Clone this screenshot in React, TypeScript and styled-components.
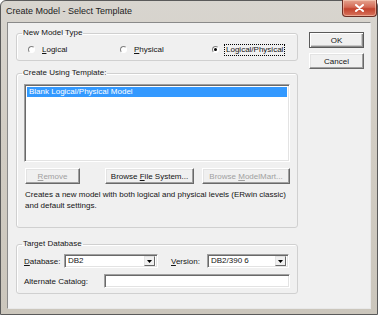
import React, { FC } from 'react';
import styled, { createGlobalStyle, css } from 'styled-components';

const GlobalStyle = createGlobalStyle`
  html, body {
    margin: 0;
    padding: 0;
    background: #ffffff;
  }
`;

const Window = styled.div`
  width: 378px;
  height: 315px;
  box-sizing: border-box;
  display: flex;
  flex-direction: column;
  padding: 0 6px 5px 6px;
  border: 1px solid #5a5a5a;
  border-radius: 6px 6px 0 0;
  background: linear-gradient(180deg, #d8d5cf 0%, #d2cdc4 40%, #cbc6bc 100%);
  font-family: 'Liberation Sans', Arial, sans-serif;
  font-size: 8px;
  color: #141414;
`;

const TitleBar = styled.div`
  height: 21px;
  display: flex;
  align-items: flex-start;
  justify-content: space-between;
  margin-left: -1px;
`;

const Title = styled.div`
  padding-top: 5px;
  font-family: 'Liberation Sans', Arial, sans-serif;
  font-size: 9px;
  color: #222222;
`;

const CloseButton = styled.div`
  width: 35px;
  height: 17px;
  margin-top: -1px;
  margin-right: -6px;
  box-sizing: border-box;
  display: flex;
  align-items: center;
  justify-content: center;
  border: 1px solid #6b2e24;
  border-top: none;
  border-radius: 0 0 4px 4px;
  background: linear-gradient(180deg, #e5a48f 0%, #d46a55 45%, #c2432d 55%, #d7735c 100%);
  box-shadow: inset 0 0 0 1px rgba(255, 220, 200, 0.5);
`;

const Client = styled.div`
  flex: 1;
  display: flex;
  background: #f0f0f0;
  border: 1px solid #8a8a8a;
  border-right-color: #e8e8e8;
  border-bottom-color: #e8e8e8;
`;

const Main = styled.div`
  width: 282px;
  padding: 5px 0 0 8px;
  display: flex;
  flex-direction: column;
`;

const Side = styled.div`
  padding: 9px 0 0 11px;
  display: flex;
  flex-direction: column;
  gap: 5px;
`;

const Group = styled.fieldset<{ $height: number; $gap?: number }>`
  margin: 0 0 ${(p) => p.$gap ?? 0}px 0;
  padding: 0;
  height: ${(p) => p.$height}px;
  box-sizing: border-box;
  border: 1px solid #d0d0d0;
  border-radius: 3px;
  box-shadow: inset 1px 1px 0 #ffffff;
`;

const Legend = styled.legend`
  margin-left: 5px;
  padding: 0 1px;
  line-height: 10px;
  height: 10px;
`;

const RadioRow = styled.div`
  display: grid;
  grid-template-columns: 92px 92px auto;
  padding: 6px 0 0 11px;
`;

const RadioItem = styled.label`
  display: flex;
  align-items: center;
  height: 11px;
`;

const RadioCircle = styled.span<{ $checked?: boolean }>`
  width: 7px;
  height: 7px;
  box-sizing: border-box;
  border-radius: 50%;
  border: 1px solid;
  border-color: #808080 #ffffff #ffffff #808080;
  background: #ffffff;
  margin-right: 5px;
  position: relative;
  ${(p) =>
    p.$checked &&
    css`
      &::after {
        content: '';
        position: absolute;
        left: 1px;
        top: 1px;
        width: 3px;
        height: 3px;
        border-radius: 50%;
        background: #000000;
      }
    `}
`;

const RadioText = styled.span<{ $focused?: boolean }>`
  line-height: 10px;
  padding: 0 1px;
  border: 1px dotted ${(p) => (p.$focused ? '#000000' : 'transparent')};
`;

const Key = styled.u`
  text-decoration: underline;
`;

const ListBox = styled.div`
  margin: 6px 0 0 7px;
  width: 266px;
  height: 78px;
  box-sizing: border-box;
  background: #ffffff;
  border: 1px solid;
  border-color: #a0a0a0 #ffffff #ffffff #a0a0a0;
  box-shadow: inset 1px 1px 0 #696969, inset -1px -1px 0 #e3e3e3;
  padding: 2px;
`;

const ListItem = styled.div<{ $selected?: boolean }>`
  height: 10px;
  line-height: 10px;
  padding-left: 2px;
  background: ${(p) => (p.$selected ? '#3399ff' : 'transparent')};
  color: ${(p) => (p.$selected ? '#ffffff' : '#000000')};
`;

const ButtonRow = styled.div`
  display: flex;
  margin: 6px 0 0 8px;
`;

const Button = styled.div<{ $width: number; $gap?: number; $disabled?: boolean; $default?: boolean }>`
  width: ${(p) => p.$width}px;
  height: 16px;
  margin-left: ${(p) => p.$gap ?? 0}px;
  box-sizing: border-box;
  display: flex;
  align-items: center;
  justify-content: center;
  background: #f0f0f0;
  border: 1px solid;
  border-color: #ffffff #696969 #696969 #ffffff;
  box-shadow: inset -1px -1px 0 #a0a0a0, inset 1px 1px 0 #e3e3e3;
  color: ${(p) => (p.$disabled ? '#a0a0a0' : '#141414')};
  ${(p) =>
    p.$default &&
    css`
      border-color: #5a5a5a;
      box-shadow: inset 1px 1px 0 #ffffff, inset -1px -1px 0 #8c8c8c, inset -2px -2px 0 #c8c8c8;
    `}
`;

const Description = styled.div`
  margin: 5px 0 0 8px;
  line-height: 11px;
`;

const FieldRow = styled.div<{ $top: number }>`
  display: flex;
  align-items: center;
  padding: ${(p) => p.$top}px 0 0 7px;
`;

const FieldLabel = styled.span<{ $width: number }>`
  width: ${(p) => p.$width}px;
`;

const Combo = styled.div<{ $width: number; $gap?: number }>`
  width: ${(p) => p.$width}px;
  height: 14px;
  margin-right: ${(p) => p.$gap ?? 0}px;
  box-sizing: border-box;
  display: flex;
  align-items: center;
  background: #ffffff;
  border: 1px solid;
  border-color: #a0a0a0 #ffffff #ffffff #a0a0a0;
  box-shadow: inset 1px 1px 0 #696969, inset -1px -1px 0 #e3e3e3;
  padding: 2px 2px 2px 3px;
`;

const ComboText = styled.span`
  flex: 1;
  line-height: 10px;
`;

const ComboArrow = styled.span`
  width: 11px;
  height: 10px;
  box-sizing: border-box;
  display: flex;
  align-items: center;
  justify-content: center;
  background: #f0f0f0;
  border: 1px solid;
  border-color: #e3e3e3 #696969 #696969 #e3e3e3;
`;

const TextInput = styled.div`
  width: 186px;
  height: 14px;
  box-sizing: border-box;
  background: #ffffff;
  border: 1px solid;
  border-color: #a0a0a0 #ffffff #ffffff #a0a0a0;
  box-shadow: inset 1px 1px 0 #696969, inset -1px -1px 0 #e3e3e3;
`;

const Arrow: FC = () => (
  <svg width="5" height="3" viewBox="0 0 5 3">
    <path d="M0 0H5L2.5 3Z" fill="#000000" />
  </svg>
);

const CloseGlyph: FC = () => (
  <svg width="9" height="8" viewBox="0 0 9 8">
    <path
      d="M1 1L8 7M8 1L1 7"
      stroke="#ffffff"
      strokeWidth="2"
      strokeLinecap="round"
    />
  </svg>
);

const App: FC = (): JSX.Element => {
  return (
    <>
      <GlobalStyle />
      <Window>
        <TitleBar>
          <Title>Create Model - Select Template</Title>
          <CloseButton>
            <CloseGlyph />
          </CloseButton>
        </TitleBar>
        <Client>
          <Main>
            <Group $height={33} $gap={7}>
              <Legend>New Model Type</Legend>
              <RadioRow>
                <RadioItem>
                  <RadioCircle />
                  <RadioText>
                    <Key>L</Key>ogical
                  </RadioText>
                </RadioItem>
                <RadioItem>
                  <RadioCircle />
                  <RadioText>
                    <Key>P</Key>hysical
                  </RadioText>
                </RadioItem>
                <RadioItem>
                  <RadioCircle $checked />
                  <RadioText $focused>
                    Lo<Key>g</Key>ical/Physical
                  </RadioText>
                </RadioItem>
              </RadioRow>
            </Group>

            <Group $height={160} $gap={11}>
              <Legend>Create Using Template:</Legend>
              <ListBox>
                <ListItem $selected>Blank Logical/Physical Model</ListItem>
              </ListBox>
              <ButtonRow>
                <Button $width={55} $disabled>
                  <span>
                    <Key>R</Key>emove
                  </span>
                </Button>
                <Button $width={89} $gap={25}>
                  <span>
                    Browse <Key>F</Key>ile System...
                  </span>
                </Button>
                <Button $width={88} $gap={8} $disabled>
                  <span>
                    Browse <Key>M</Key>odelMart...
                  </span>
                </Button>
              </ButtonRow>
              <Description>
                Creates a new model with both logical and physical levels (ERwin classic)
                <br />
                and default settings.
              </Description>
            </Group>

            <Group $height={55}>
              <Legend>Target Database</Legend>
              <FieldRow $top={5}>
                <FieldLabel $width={40}>
                  <Key>D</Key>atabase:
                </FieldLabel>
                <Combo $width={94} $gap={13}>
                  <ComboText>DB2</ComboText>
                  <ComboArrow>
                    <Arrow />
                  </ComboArrow>
                </Combo>
                <FieldLabel $width={36}>
                  <Key>V</Key>ersion:
                </FieldLabel>
                <Combo $width={82}>
                  <ComboText>DB2/390 6</ComboText>
                  <ComboArrow>
                    <Arrow />
                  </ComboArrow>
                </Combo>
              </FieldRow>
              <FieldRow $top={6}>
                <FieldLabel $width={80}>Alternate Catalog:</FieldLabel>
                <TextInput />
              </FieldRow>
            </Group>
          </Main>
          <Side>
            <Button $width={55} $default>
              OK
            </Button>
            <Button $width={55}>Cancel</Button>
          </Side>
        </Client>
      </Window>
    </>
  );
};

export default App;
